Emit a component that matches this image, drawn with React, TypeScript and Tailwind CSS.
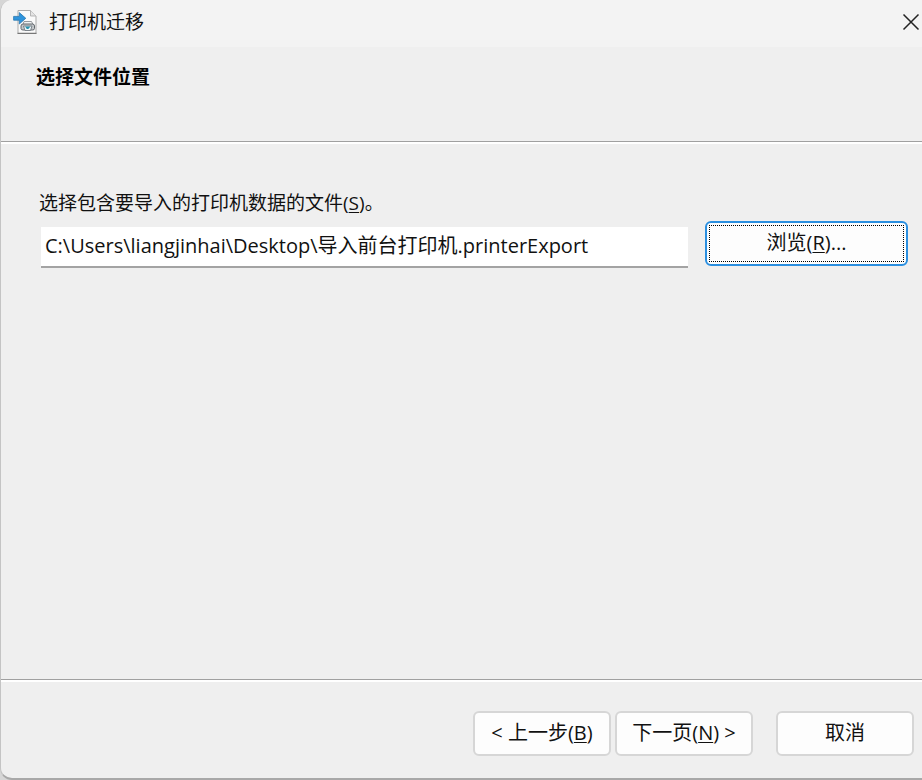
import type { ButtonHTMLAttributes, ReactNode } from "react";

function PrinterImportIcon() {
  return (
    <svg viewBox="0 0 24 26" className="h-[26px] w-6 shrink-0" aria-hidden="true">
      <path d="M5 1.5h12.5l5.5 5.5v17.5h-18z" fill="#fafafa" stroke="#ababab" />
      <path d="M4.5 24.3h19" stroke="#777" strokeWidth="1.2" />
      <path d="M17.5 1.5v5.500h5.500" fill="#e4e4e4" stroke="#b5b5b5" />
      <path d="M11 12.500h7.500l1.500 3h-10z" fill="#f1f3f4" stroke="#8b8f93" strokeWidth="0.9" />
      <path d="M8 17q0-2 2-2h9.500q2 0 2 2v2.500q0 1.500-2 1.500h-9.500q-2 0-2-1.500z" fill="#c3c7ca" stroke="#62686d" />
      <path d="M10.500 17h8.500l-1.500 4.500h-5.500z" fill="#eef6f8" stroke="#697178" strokeWidth="0.8" />
      <path d="M12 17.500h5.500l-2.200 2.500h-1.500z" fill="#2793b0" />
      <path d="M.6 7.400h5.700v-3.800l6.500 5.700-6.500 5.700v-3.800h-5.700z" fill="#2f94dc" stroke="#2877b0" strokeWidth="0.8" />
    </svg>
  );
}

function DialogButton({
  focused = false,
  className = "",
  children,
  ...rest
}: ButtonHTMLAttributes<HTMLButtonElement> & { focused?: boolean; children: ReactNode }) {
  const frame = focused
    ? "border-2 border-[#2a8fe0] p-0.5"
    : "border-2 border-[#d6d6d6]";
  return (
    <button
      type="button"
      className={`flex h-[45px] shrink-0 rounded-md bg-[#fdfdfd] text-xl whitespace-pre ${frame} ${className}`}
      {...rest}
    >
      <span
        className={`flex h-full w-full items-center justify-center ${
          focused ? "border border-dotted border-black pb-0.5" : "pb-0.5"
        }`}
      >
        <span>{children}</span>
      </span>
    </button>
  );
}

function Key({ children }: { children: string }) {
  return <span className="underline decoration-1 underline-offset-2">{children}</span>;
}

export default function App() {
  return (
    <div className="min-h-screen bg-[#d6d6d6] font-['Open_Sans','Noto_Sans_CJK_SC',sans-serif] text-[19px] leading-7 text-[#111]">
      <main className="flex min-h-screen flex-col overflow-hidden rounded-l-xl border-b-2 border-l border-b-[#a8a8a8] border-l-[#c4c4c4] bg-[#efefef]">
        <header className="flex h-[47px] shrink-0 items-center bg-[#f3f3f3] pb-1 pl-3">
          <PrinterImportIcon />
          <h1 className="ml-3 text-[19px]">打印机迁移</h1>
          <button type="button" aria-label="关闭" className="ml-auto flex h-10 w-7 items-center">
            <svg viewBox="0 0 18 18" className="ml-2 size-[18px] shrink-0" aria-hidden="true">
              <path d="M1.5 1.5l15 15M16.5 1.5l-15 15" stroke="#222" strokeWidth="1.5" />
            </svg>
          </button>
        </header>

        <section className="h-[95px] shrink-0 border-b border-[#a0a0a0] pt-4 pl-[35px]">
          <h2 className="text-[19px] font-bold text-black">选择文件位置</h2>
        </section>

        <section className="flex-1 border-t-2 border-white pt-[45px] pr-3.5 pl-[38px]">
          <label htmlFor="path" className="block">
            选择包含要导入的打印机数据的文件(<Key>S</Key>)。
          </label>
          <div className="mt-1 flex items-start">
            <input
              id="path"
              type="text"
              defaultValue="C:\Users\liangjinhai\Desktop\导入前台打印机.printerExport"
              className="mt-1.5 ml-0.5 h-[41px] min-w-0 flex-1 border-b-2 border-[#a3a3a3] bg-white px-1 pb-1 text-xl outline-none"
            />
            <DialogButton focused className="ml-[17px] w-[203px]">
              浏览(<Key>R</Key>)...
            </DialogButton>
          </div>
        </section>

        <footer className="flex shrink-0 items-center border-t border-[#a0a0a0]">
          <div className="flex flex-1 justify-end gap-1 border-t-2 border-white pt-[29px] pr-2 pb-[22px]">
            <DialogButton className="w-[138px]">
              {"< 上一步("}
              <Key>B</Key>)
            </DialogButton>
            <DialogButton className="w-[138px]">
              下一页(<Key>N</Key>){" >"}
            </DialogButton>
            <DialogButton className="ml-[19px] w-[138px]">取消</DialogButton>
          </div>
        </footer>
      </main>
    </div>
  );
}
